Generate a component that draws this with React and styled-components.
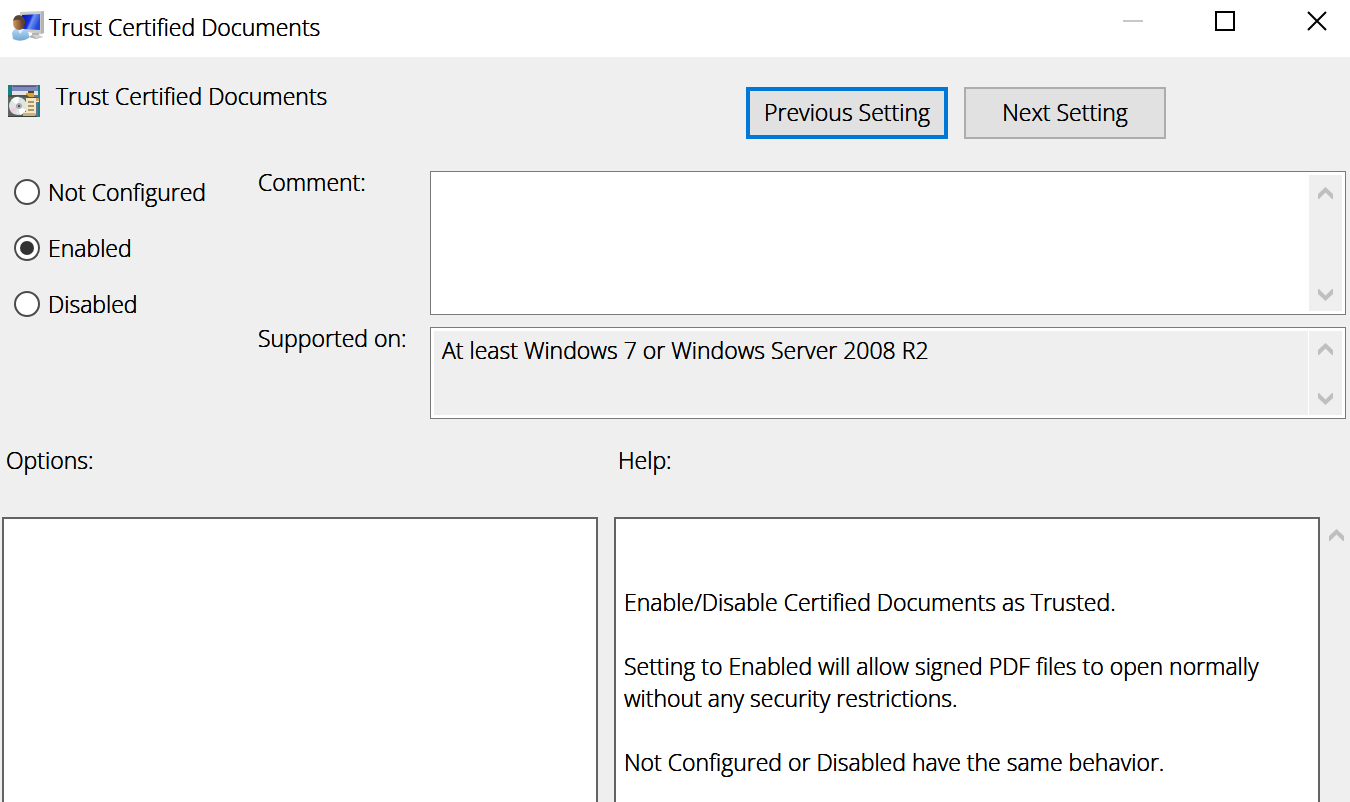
import React, { useState } from "react";
import styled, { createGlobalStyle } from "styled-components";

const GlobalStyle = createGlobalStyle`
  * { box-sizing: border-box; }
  html, body { margin: 0; }
  body { background: #efefef; overflow: hidden; }
  body, button, textarea {
    font-family: "Open Sans", "Noto Sans", sans-serif;
    font-size: 23px;
    font-weight: 300;
    line-height: 32px;
    color: #000;
    text-shadow: 0 0 0 #000, 0 0 0 #000;
  }
`;

const Window = styled.div`
  display: flex;
  flex-direction: column;
  height: 100vh;
  background: #efefef;
`;

const TitleBar = styled.header`
  display: flex;
  align-items: center;
  flex: none;
  height: 57px;
  padding: 0 23px 4px 12px;
  background: #fff;
`;

const TitleText = styled.span`
  flex: 1;
  margin-left: 5px;
`;

const WindowControls = styled.div`
  display: flex;
  gap: 72px;
  padding-bottom: 12px;
`;

const ControlButton = styled.button`
  display: block;
  width: 20px;
  height: 20px;
  padding: 0;
  border: 0;
  background: none;
  svg { display: block; }
`;

const SettingHeader = styled.div`
  display: flex;
  align-items: flex-start;
  flex: none;
  padding: 23px 184px 0 8px;
`;

const HeaderIcon = styled.div`
  width: 32px;
  height: 32px;
  margin-top: 5px;
  svg { display: block; }
`;

const SettingName = styled.h1`
  flex: 1;
  margin: 0 0 0 16px;
  font-size: 23px;
  font-weight: inherit;
`;

const NavButtons = styled.div`
  display: flex;
  gap: 16px;
  padding-top: 7px;
`;

const NavButton = styled.button`
  width: 202px;
  height: 52px;
  padding: 0 0 2px;
  white-space: nowrap;
  background: #e1e1e1;
  border: ${(p) => (p.$focused ? "4px solid #0078d7" : "2px solid #adadad")};
  outline: none;
`;

const SettingForm = styled.div`
  display: grid;
  grid-template-columns: 244px 172px minmax(0, 1fr);
  flex: none;
  padding: 32px 4px 0 14px;
`;

const RadioGroup = styled.div`
  display: flex;
  flex-direction: column;
  align-items: flex-start;
  grid-row: 1 / 3;
  gap: 24px;
  padding-top: 5px;
`;

const RadioLabel = styled.label`
  display: flex;
  align-items: center;
  gap: 8px;
`;

const Radio = styled.input`
  appearance: none;
  display: grid;
  place-items: center;
  width: 26px;
  height: 26px;
  margin: 0;
  border: 2px solid #4a4a4a;
  border-radius: 50%;
  background: #fff;
  &:checked::before {
    content: "";
    width: 14px;
    height: 14px;
    border-radius: 50%;
    background: #333;
  }
`;

const FieldLabel = styled.label`
  line-height: 22px;
`;

const Field = styled.div`
  display: flex;
  gap: 1px;
  height: ${(p) => p.$height}px;
  margin-bottom: 12px;
  padding: 3px;
  border: 1px solid #7a7a7a;
  background: #fff;
`;

const TextArea = styled.textarea`
  flex: 1;
  min-width: 0;
  padding: 3px 8px;
  border: 0;
  outline: none;
  resize: none;
  overflow: hidden;
  background: ${(p) => (p.readOnly ? "#efefef" : "#fff")};
`;

const ScrollTrack = styled.div`
  display: flex;
  flex-direction: column;
  align-items: center;
  justify-content: space-between;
  flex: none;
  width: 33px;
  padding: 12px 0 10px;
  background: #efefef;
  svg { display: block; }
`;

const Panels = styled.div`
  display: grid;
  grid-template-columns: minmax(0, 596fr) minmax(0, 706fr);
  grid-template-rows: auto minmax(0, 1fr);
  column-gap: 16px;
  flex: 1;
  min-height: 0;
  padding: 13px 30px 0 2px;
`;

const PanelTitle = styled.h2`
  margin: 0 0 41px 4px;
  font-size: 23px;
  font-weight: inherit;
`;

const Panel = styled.section`
  position: relative;
  border: 2px solid #636363;
  border-bottom: 0;
  background: #fff;
`;

const HelpText = styled.div`
  padding: 67px 8px 0;
  p { margin: 0 0 32px; }
`;

const HelpScroll = styled.div`
  position: absolute;
  top: 10px;
  left: calc(100% + 11px);
  svg { display: block; }
`;

function Chevron({ down }) {
  return (
    <svg width="15" height="12" viewBox="0 0 15 12" aria-hidden="true">
      <path
        fill="#bfbfbf"
        d={
          down
            ? "M0 0H1L7.5 6.5L14 0H15V5L7.5 12L0 5Z"
            : "M0 12H1L7.5 5.5L14 12H15V7L7.5 0L0 7Z"
        }
      />
    </svg>
  );
}

function UserComputerIcon() {
  return (
    <svg width="32" height="32" viewBox="0 0 32 32" aria-hidden="true">
      <defs>
        <linearGradient id="screen" x1="0" y1="0" x2="1" y2="0.4">
          <stop offset="0" stopColor="#0712a8" />
          <stop offset="0.5" stopColor="#1730d8" />
          <stop offset="0.62" stopColor="#6e92f2" />
          <stop offset="1" stopColor="#2447dc" />
        </linearGradient>
        <linearGradient id="shirt" x1="0" y1="0" x2="0" y2="1">
          <stop offset="0" stopColor="#b9dcf5" />
          <stop offset="1" stopColor="#6fa6d3" />
        </linearGradient>
        <linearGradient id="face" x1="0" y1="0" x2="1" y2="0">
          <stop offset="0" stopColor="#d59a5c" />
          <stop offset="0.6" stopColor="#8b5a35" />
          <stop offset="1" stopColor="#3c3030" />
        </linearGradient>
      </defs>
      <path d="M8 1L31 0Q32 0 32 1V22L29 23L8 20Z" fill="#c9cbc9" />
      <path d="M29 1L32 0V22L29 23Z" fill="#b4b5b3" />
      <path d="M10 4L28 3V19L10 18Z" fill="url(#screen)" />
      <path d="M20 22H27L27 24L31 26L24 28L16 26L20 24Z" fill="#b3b4b2" />
      <path d="M20 24L27 24L31 26L24 27Z" fill="#d3d3d1" />
      <path d="M0 22Q1 18 6 17L12 18Q17 20 17 25V27Q9 32 1 28Z" fill="url(#shirt)" />
      <path d="M5 17L8 23L12 18Z" fill="#e3f1fa" />
      <ellipse cx="7" cy="12" rx="6" ry="7" fill="url(#face)" />
      <path d="M1 10Q2 4 7 4Q13 5 13 12L11 17Q10 11 8 9Q4 8 1 10Z" fill="#594636" />
    </svg>
  );
}

function PolicyIcon() {
  return (
    <svg width="32" height="32" viewBox="0 0 32 32" aria-hidden="true">
      <rect width="32" height="32" fill="#1b7f80" />
      <rect x="4" width="26" height="32" fill="#66728f" />
      <rect x="4" y="1" width="26" height="5" fill="#7d87c0" />
      <rect x="5" y="1" width="23" height="1" fill="#535a86" />
      <rect x="4" y="6" width="26" height="4" fill="#e4e5e9" />
      <path d="M18 8H26V12H18Z" fill="#dda332" />
      <path d="M20 6H26V8H20Z" fill="#55431f" />
      <path d="M0 10H19L21 12H30V14H0Z" fill="#49564f" />
      <rect y="12" width="19" height="20" fill="#606460" />
      <circle cx="10" cy="21" r="9" fill="#dfe5e4" />
      <path d="M10 21L3 15Q7 11 11 12Z" fill="#fafafa" />
      <path d="M10 21L2 24Q2 27 6 29Z" fill="#ecd0e2" />
      <path d="M10 21L18 25Q16 29 12 30Z" fill="#fff" />
      <circle cx="11" cy="21" r="3" fill="#a9afae" />
      <circle cx="11" cy="21" r="1" fill="#343b3b" />
      <path d="M18 13H31V17H28V28L27 31H15V27H18Z" fill="#f4e6c4" />
      <path d="M28 13H31V16H28Z" fill="#bda475" />
      <path d="M20 17H26M20 21H26M20 25H26" stroke="#a59672" strokeWidth="2" />
      <path d="M15 28H27V31H15Z" fill="#cdb27d" />
      <path d="M0 31H29V32H0Z" fill="#364240" />
    </svg>
  );
}

const STATES = ["Not Configured", "Enabled", "Disabled"];

export default function App() {
  const [state, setState] = useState("Enabled");
  const [comment, setComment] = useState("");

  return (
    <>
      <GlobalStyle />
      <Window>
        <TitleBar>
          <UserComputerIcon />
          <TitleText>Trust Certified Documents</TitleText>
          <WindowControls>
            <ControlButton aria-label="Minimize">
              <svg width="20" height="20">
                <path d="M0 10H20" stroke="#c8c8c8" strokeWidth="2" />
              </svg>
            </ControlButton>
            <ControlButton aria-label="Maximize">
              <svg width="20" height="20">
                <rect x="1" y="1" width="18" height="18" fill="none" stroke="#000" strokeWidth="2" />
              </svg>
            </ControlButton>
            <ControlButton aria-label="Close">
              <svg width="20" height="20">
                <path d="M1 1L19 19M19 1L1 19" stroke="#000" strokeWidth="2" />
              </svg>
            </ControlButton>
          </WindowControls>
        </TitleBar>

        <SettingHeader>
          <HeaderIcon>
            <PolicyIcon />
          </HeaderIcon>
          <SettingName>Trust Certified Documents</SettingName>
          <NavButtons>
            <NavButton $focused>Previous Setting</NavButton>
            <NavButton>Next Setting</NavButton>
          </NavButtons>
        </SettingHeader>

        <SettingForm>
          <RadioGroup role="radiogroup">
            {STATES.map((name) => (
              <RadioLabel key={name}>
                <Radio
                  type="radio"
                  name="state"
                  checked={state === name}
                  onChange={() => setState(name)}
                />
                {name}
              </RadioLabel>
            ))}
          </RadioGroup>
          <FieldLabel htmlFor="comment">Comment:</FieldLabel>
          <Field $height={144}>
            <TextArea
              id="comment"
              value={comment}
              onChange={(e) => setComment(e.target.value)}
            />
            <ScrollTrack>
              <Chevron />
              <Chevron down />
            </ScrollTrack>
          </Field>
          <FieldLabel htmlFor="supported">Supported on:</FieldLabel>
          <Field $height={92}>
            <TextArea
              id="supported"
              readOnly
              value="At least Windows 7 or Windows Server 2008 R2"
            />
            <ScrollTrack>
              <Chevron />
              <Chevron down />
            </ScrollTrack>
          </Field>
        </SettingForm>

        <Panels>
          <PanelTitle>Options:</PanelTitle>
          <PanelTitle>Help:</PanelTitle>
          <Panel />
          <Panel>
            <HelpText>
              <p>Enable/Disable Certified Documents as Trusted.</p>
              <p>
                Setting to Enabled will allow signed PDF files to open normally
                without any security restrictions.
              </p>
              <p>Not Configured or Disabled have the same behavior.</p>
            </HelpText>
            <HelpScroll>
              <Chevron />
            </HelpScroll>
          </Panel>
        </Panels>
      </Window>
    </>
  );
}
